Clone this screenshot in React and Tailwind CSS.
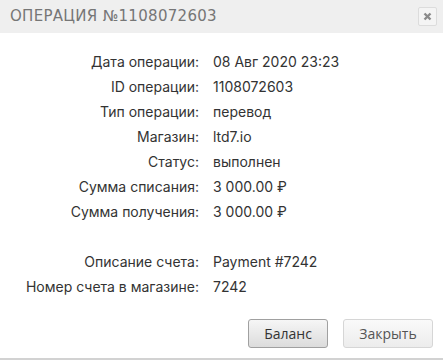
const rows = [
  ['Дата операции:', '08 Авг 2020 23:23'],
  ['ID операции:', '1108072603'],
  ['Тип операции:', 'перевод'],
  ['Магазин:', 'ltd7.io'],
  ['Статус:', 'выполнен'],
  ['Сумма списания:', '3 000.00 ₽'],
  ['Сумма получения:', '3 000.00 ₽'],
  null,
  ['Описание счета:', 'Payment #7242'],
  ['Номер счета в магазине:', '7242'],
];

function App() {
  return (
    <div className="w-[443px] h-[360px] bg-white flex flex-col border-b-2 border-[#d2d2d2]">
      <div className="h-[33px] bg-[#efefef] flex items-center justify-between pl-[10px] pr-[6px]">
        <span className="text-[15px] text-[#767676] tracking-[0.3px] font-['DejaVu_Sans',sans-serif]">
          ОПЕРАЦИЯ №1108072603
        </span>
        <button className="w-[19px] h-[19px] flex items-center justify-center border border-[#dcdcdc] bg-[#f4f4f4] rounded-[2px]">
          <svg width="9" height="9" viewBox="0 0 9 9">
            <path d="M1.5 1.5 L7.5 7.5 M7.5 1.5 L1.5 7.5" stroke="#8a8a8a" strokeWidth="2.4" />
          </svg>
        </button>
      </div>
      <div className="flex flex-col pt-[16px] font-['Inter',sans-serif] text-[14px] text-[#333]">
        {rows.map((r, i) =>
          r ? (
            <div key={i} className="h-[25px] flex items-center">
              <div className="w-[199px] text-right">{r[0]}</div>
              <div className="pl-[14px]">{r[1]}</div>
            </div>
          ) : (
            <div key={i} className="h-[25px]" />
          )
        )}
      </div>
      <div className="flex-1" />
      <div className="flex justify-end gap-[15px] pr-[10px] pb-[10px] font-['Open_Sans',sans-serif] text-[14px]">
        <button className="w-[80px] h-[29px] rounded-[3px] border border-[#a0a0a0] bg-gradient-to-b from-[#f6f6f6] to-[#dcdcdc] text-[#333]">
          Баланс
        </button>
        <button className="w-[90px] h-[29px] rounded-[3px] border border-[#d6d6d6] bg-gradient-to-b from-[#fafafa] to-[#ececec] text-[#555]">
          Закрыть
        </button>
      </div>
    </div>
  );
}

export default App;
